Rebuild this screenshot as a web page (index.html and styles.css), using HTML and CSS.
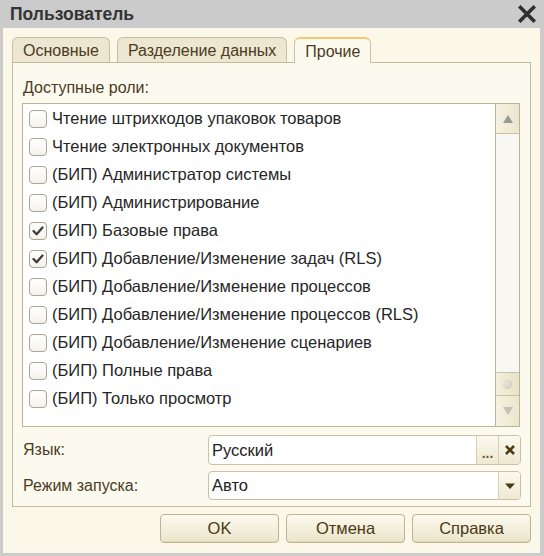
FILE: index.html
```html
<!DOCTYPE html>
<html lang="ru">
<head>
<meta charset="utf-8">
<title>Пользователь</title>
<link rel="stylesheet" href="styles.css">
</head>
<body>
<div class="window">
  <div class="titlebar">
    <span class="title">Пользователь</span>
    <svg class="close" width="18" height="18" viewBox="0 0 18 18"><path d="M2.5 2.5 L15.5 15.5 M15.5 2.5 L2.5 15.5" stroke="#2f2f2f" stroke-width="3.6" stroke-linecap="square" fill="none"/></svg>
  </div>
  <div class="body">
    <div class="tabs">
      <div class="tab">Основные</div>
      <div class="tab">Разделение данных</div>
      <div class="tab active">Прочие</div>
    </div>
    <div class="panel">
      <div class="label roles-label">Доступные роли:</div>
      <div class="listbox">
        <div class="list">
          <div class="row"><span class="cb"></span><span>Чтение штрихкодов упаковок товаров</span></div>
          <div class="row"><span class="cb"></span><span>Чтение электронных документов</span></div>
          <div class="row"><span class="cb"></span><span>(БИП) Администратор системы</span></div>
          <div class="row"><span class="cb"></span><span>(БИП) Администрирование</span></div>
          <div class="row"><span class="cb checked"><svg width="18" height="18" viewBox="0 0 18 18"><path d="M4.5 9 L7.6 12.2 L13.5 5.5" stroke="#3c3c3c" stroke-width="2.3" fill="none" stroke-linecap="round" stroke-linejoin="round"/></svg></span><span>(БИП) Базовые права</span></div>
          <div class="row"><span class="cb checked"><svg width="18" height="18" viewBox="0 0 18 18"><path d="M4.5 9 L7.6 12.2 L13.5 5.5" stroke="#3c3c3c" stroke-width="2.3" fill="none" stroke-linecap="round" stroke-linejoin="round"/></svg></span><span>(БИП) Добавление/Изменение задач (RLS)</span></div>
          <div class="row"><span class="cb"></span><span>(БИП) Добавление/Изменение процессов</span></div>
          <div class="row"><span class="cb"></span><span>(БИП) Добавление/Изменение процессов (RLS)</span></div>
          <div class="row"><span class="cb"></span><span>(БИП) Добавление/Изменение сценариев</span></div>
          <div class="row"><span class="cb"></span><span>(БИП) Полные права</span></div>
          <div class="row"><span class="cb"></span><span>(БИП) Только просмотр</span></div>
        </div>
        <div class="scrollbar">
          <div class="sb-btn"><svg width="12" height="10" viewBox="0 0 12 10"><path d="M6 1 L11 9 L1 9 Z" fill="#9a9a96"/></svg></div>
          <div class="sb-track"></div>
          <div class="sb-thumb"><span class="dot"></span></div>
          <div class="sb-btn"><svg width="12" height="10" viewBox="0 0 12 10"><path d="M1 1 L11 1 L6 9 Z" fill="#c4c2b8"/></svg></div>
        </div>
      </div>
      <div class="field-row first">
        <div class="label">Язык:</div>
        <div class="input">
          <span class="value">Русский</span>
          <span class="ibtn dots">...</span>
          <span class="ibtn"><svg width="12" height="12" viewBox="0 0 12 12"><path d="M2 2 L10 10 M10 2 L2 10" stroke="#4b3a14" stroke-width="2.6" fill="none"/></svg></span>
        </div>
      </div>
      <div class="field-row second">
        <div class="label">Режим запуска:</div>
        <div class="input">
          <span class="value">Авто</span>
          <span class="ibtn"><svg width="12" height="8" viewBox="0 0 12 8"><path d="M1 1.5 L11 1.5 L6 7 Z" fill="#4b3a14"/></svg></span>
        </div>
      </div>
    </div>
    <div class="buttons">
      <div class="btn">OK</div>
      <div class="btn">Отмена</div>
      <div class="btn">Справка</div>
    </div>
  </div>
</div>
</body>
</html>
```
FILE: styles.css
```css
* { box-sizing: border-box; }
html, body { margin: 0; padding: 0; }
body {
  font-family: "Liberation Sans", Arial, sans-serif;
  font-size: 16px;
  color: #2e2e2e;
  background: #cbcbcb;
}
.window {
  width: 544px;
  height: 556px;
  background: #cbcbcb;
  display: flex;
  flex-direction: column;
}
.titlebar {
  height: 28px;
  display: flex;
  align-items: center;
  justify-content: space-between;
  padding: 0 8px 0 10px;
}
.title {
  font-weight: bold;
  font-size: 17.5px;
  color: #333;
}
.close { display: block; }
.body {
  flex: 1;
  margin: 0 4px 3px 3px;
  background: #fbf8e9;
  padding: 9px 9px 0 9px;
  display: flex;
  flex-direction: column;
}
.tabs {
  display: flex;
  align-items: flex-start;
  gap: 7px;
  height: 26px;
  margin-bottom: -1px;
}
.tab {
  height: 25px;
  padding: 0 10px;
  border: 1px solid #c7bf9f;
  border-bottom: none;
  border-radius: 6px 6px 0 0;
  background: #ede6d0;
  color: #4a3c1e;
  display: flex;
  align-items: center;
  padding-top: 1px;
}
.tab.active {
  height: 26px;
  background: #fcfaee;
  border-top: 2px solid #f1c877;
  position: relative;
  z-index: 1;
}
.panel {
  height: 445px;
  border: 1px solid #c2ba99;
  background: #fcfaee;
  padding: 15px 9px 0 9px;
}
.label {
  color: #4a3c1e;
  height: 20px;
  line-height: 20px;
}
.roles-label {
  margin-left: 1px;
  margin-bottom: 5px;
}
.listbox {
  height: 324px;
  margin-right: 1px;
  border: 1px solid #bcb493;
  background: #fff;
  display: flex;
}
.list {
  flex: 1;
  overflow: hidden;
}
.row {
  height: 28px;
  display: flex;
  align-items: center;
  padding-left: 6px;
  padding-top: 1px;
  white-space: nowrap;
  color: #262626;
  font-size: 16.5px;
}
.cb {
  width: 18px;
  height: 18px;
  border: 1px solid #a9a590;
  border-radius: 4px;
  background: linear-gradient(#ffffff, #f3f2ec);
  margin-right: 5px;
  flex: none;
  display: flex;
}
.cb svg { display: block; margin: -1px; }
.scrollbar {
  width: 24px;
  border-left: 1px solid #bcb493;
  display: flex;
  flex-direction: column;
  background: #f8f7f1;
}
.sb-btn {
  height: 30px;
  background: linear-gradient(90deg, #f5f2e1, #ebe6cd);
  display: flex;
  align-items: center;
  justify-content: center;
}
.sb-btn:first-child { border-bottom: 1px solid #c9c2a4; }
.sb-track { flex: 1; }
.sb-thumb {
  height: 24px;
  border-top: 1px solid #c9c2a4;
  border-bottom: 1px solid #c9c2a4;
  background: linear-gradient(90deg, #f3efdb, #e8e2c6);
  display: flex;
  align-items: center;
  justify-content: center;
}
.dot {
  width: 9px;
  height: 9px;
  border-radius: 50%;
  background: radial-gradient(circle at 35% 35%, #e8e5da, #c9c6ba);
}
.field-row {
  display: grid;
  grid-template-columns: 186px 1fr;
  align-items: center;
}
.field-row.first { margin-top: 8px; height: 30px; }
.field-row.second { margin-top: 6px; height: 29px; }
.field-row .label { padding-left: 1px; }
.input {
  height: 100%;
  border: 1px solid #c9c1a1;
  border-radius: 4px;
  background: #fff;
  display: flex;
  align-items: stretch;
  overflow: hidden;
}
.value {
  flex: 1;
  display: flex;
  align-items: center;
  padding-left: 3px;
  color: #222;
  font-size: 16.5px;
}
.ibtn {
  width: 22px;
  border-left: 1px solid #d7d0b4;
  background: linear-gradient(#fbf9ee, #efe9d2);
  display: flex;
  align-items: center;
  justify-content: center;
  color: #6b5a34;
  font-weight: bold;
  font-size: 14px;
}
.ibtn.dots {
  align-items: flex-end;
  padding-bottom: 6px;
  line-height: 10px;
}
.buttons {
  margin-top: 7px;
  display: flex;
  justify-content: flex-end;
  gap: 7px;
}
.btn {
  width: 119px;
  height: 29px;
  border: 1px solid #bdb591;
  border-radius: 4px;
  background: linear-gradient(#fcfaee, #ece5cb);
  box-shadow: inset 0 -1px 0 #e1d9b9;
  display: flex;
  align-items: center;
  justify-content: center;
  color: #4a3a14;
  font-size: 16.5px;
}
```
